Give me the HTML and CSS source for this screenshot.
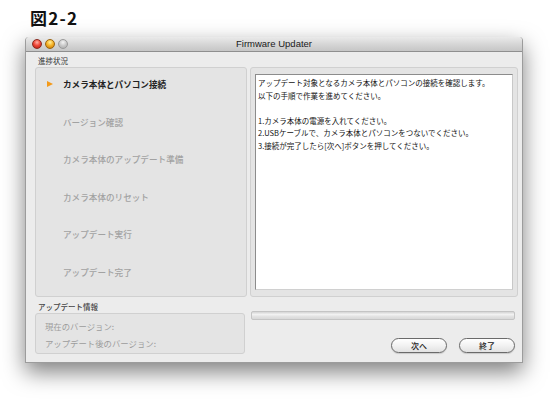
FILE: index.html
```html
<!DOCTYPE html>
<html lang="ja">
<head>
<meta charset="utf-8">
<title>Firmware Updater</title>
<link rel="stylesheet" href="styles.css">
</head>
<body>
<div class="fig">図2-2</div>
<div class="window">
  <div class="titlebar">
    <div class="lights">
      <span class="light red"></span>
      <span class="light orange"></span>
      <span class="light gray"></span>
    </div>
    <div class="title">Firmware Updater</div>
  </div>
  <div class="body">
    <div class="label label-top">進捗状況</div>
    <div class="main">
      <div class="panel steps">
        <div class="step active"><span class="arrow"></span>カメラ本体とパソコン接続</div>
        <div class="step">バージョン確認</div>
        <div class="step">カメラ本体のアップデート準備</div>
        <div class="step">カメラ本体のリセット</div>
        <div class="step">アップデート実行</div>
        <div class="step">アップデート完了</div>
      </div>
      <div class="panel msg-panel">
        <div class="msg">
          <p>アップデート対象となるカメラ本体とパソコンの接続を確認します。<br>以下の手順で作業を進めてください。</p>
          <p>1.カメラ本体の電源を入れてください。<br>2.USBケーブルで、カメラ本体とパソコンをつないでください。<br>3.接続が完了したら[次へ]ボタンを押してください。</p>
        </div>
      </div>
    </div>
    <div class="bottom">
      <div class="info-col">
        <div class="label label-info">アップデート情報</div>
        <div class="panel info">
          <div class="info-line">現在のバージョン:</div>
          <div class="info-line">アップデート後のバージョン:</div>
        </div>
      </div>
      <div class="action-col">
        <div class="progress"></div>
        <div class="buttons">
          <button class="btn">次へ</button>
          <button class="btn">終了</button>
        </div>
      </div>
    </div>
  </div>
</div>
</body>
</html>
```
FILE: styles.css
```css
html, body {
  margin: 0;
  padding: 0;
  background: #ffffff;
}
body {
  width: 550px;
  height: 400px;
  overflow: hidden;
  font-family: "Noto Sans CJK JP", "Noto Sans", sans-serif;
}
.fig {
  height: 37px;
  padding-left: 30px;
  font-size: 17px;
  font-weight: bold;
  line-height: 36px;
  color: #111;
  letter-spacing: 1.2px;
}
.window {
  width: 496px;
  height: 325px;
  margin-left: 25px;
  background: #ececec;
  border: 1px solid #9c9c9c;
  border-top: none;
  box-shadow: 0 9px 22px rgba(0, 0, 0, 0.5);
  border-radius: 4px 4px 0 0;
}
.titlebar {
  height: 14px;
  border-bottom: 1px solid #8f8f8f;
  background: linear-gradient(#eaeaea, #d3d3d3 60%, #c6c6c6);
  border-radius: 4px 4px 0 0;
  display: flex;
  align-items: center;
  position: relative;
}
.lights {
  display: flex;
  gap: 3px;
  padding-left: 6px;
  align-items: center;
}
.light {
  width: 10px;
  height: 10px;
  border-radius: 50%;
  box-sizing: border-box;
}
.red {
  background: radial-gradient(circle at 50% 30%, #ffb0a8 0, #f04a3a 45%, #b0140c 100%);
  border: 1px solid #8a2a20;
}
.orange {
  background: radial-gradient(circle at 50% 30%, #fff0a0 0, #f7b52a 45%, #c27300 100%);
  border: 1px solid #9a6410;
}
.gray {
  background: radial-gradient(circle at 50% 30%, #f4f4f4 0, #c8c8c8 50%, #a8a8a8 100%);
  border: 1px solid #9a9a9a;
}
.title {
  position: absolute;
  left: 0;
  right: 0;
  top: 0;
  text-align: center;
  font-family: "Liberation Sans", Arial, sans-serif;
  font-size: 9.5px;
  line-height: 14px;
  color: #1a1a1a;
  pointer-events: none;
}
.body {
  padding: 0 4px 0 9px;
}
.label {
  font-size: 7.5px;
  color: #333;
  padding-left: 3px;
}
.label-top {
  height: 15px;
  line-height: 18px;
}
.main {
  display: flex;
  gap: 3px;
  height: 230px;
}
.panel {
  background: #e4e4e4;
  border: 1px solid #d0d0d0;
  border-radius: 3px;
  box-sizing: border-box;
}
.steps {
  width: 212px;
  padding-top: 11px;
}
.step {
  height: 37.5px;
  line-height: 10px;
  font-size: 8.6px;
  font-weight: 500;
  color: #a2a2a2;
  padding-left: 27px;
  display: flex;
  align-items: flex-start;
}
.step.active {
  color: #222;
  font-weight: bold;
  padding-left: 11px;
}
.arrow {
  width: 0;
  height: 0;
  border-top: 3.5px solid transparent;
  border-bottom: 3.5px solid transparent;
  border-left: 6px solid #f39a1a;
  margin-top: 1.5px;
  margin-right: 10px;
}
.msg-panel {
  width: 268px;
  padding: 6px 4px 6px 4px;
}
.msg {
  height: 100%;
  box-sizing: border-box;
  background: #ffffff;
  border: 1px solid #8c8c8c;
  border-right-color: #c8c8c8;
  border-bottom-color: #d0d0d0;
  padding: 2px 2px;
  font-size: 7.5px;
  line-height: 12.5px;
  color: #111;
}
.msg p {
  margin: 0 0 12.5px 0;
}
.bottom {
  display: flex;
}
.info-col {
  width: 210px;
}
.label-info {
  height: 16px;
  line-height: 20px;
  font-weight: 500;
  color: #444;
}
.info {
  height: 41px;
  padding: 3.5px 0 0 9px;
}
.info-line {
  font-size: 8.4px;
  line-height: 17px;
  color: #9c9c9c;
}
.action-col {
  width: 264px;
  margin-left: 6px;
  padding-top: 14px;
}
.progress {
  height: 9px;
  box-sizing: border-box;
  border: 1px solid #c4c4c4;
  border-radius: 2px;
  background: linear-gradient(#d4d4d4, #f2f2f2 35%, #e2e2e2 65%, #d8d8d8);
}
.buttons {
  display: flex;
  justify-content: flex-end;
  gap: 12px;
  margin-top: 18px;
}
.btn {
  width: 56px;
  height: 15px;
  padding: 0;
  border: 1px solid #6a6a6a;
  border-radius: 8px;
  background: linear-gradient(#ffffff, #f2f2f2 50%, #e2e2e2);
  font-family: "Noto Sans CJK JP", sans-serif;
  font-size: 8px;
  font-weight: 500;
  line-height: 13px;
  color: #222;
  box-shadow: 0 1px 1px rgba(0, 0, 0, 0.15);
}
```
